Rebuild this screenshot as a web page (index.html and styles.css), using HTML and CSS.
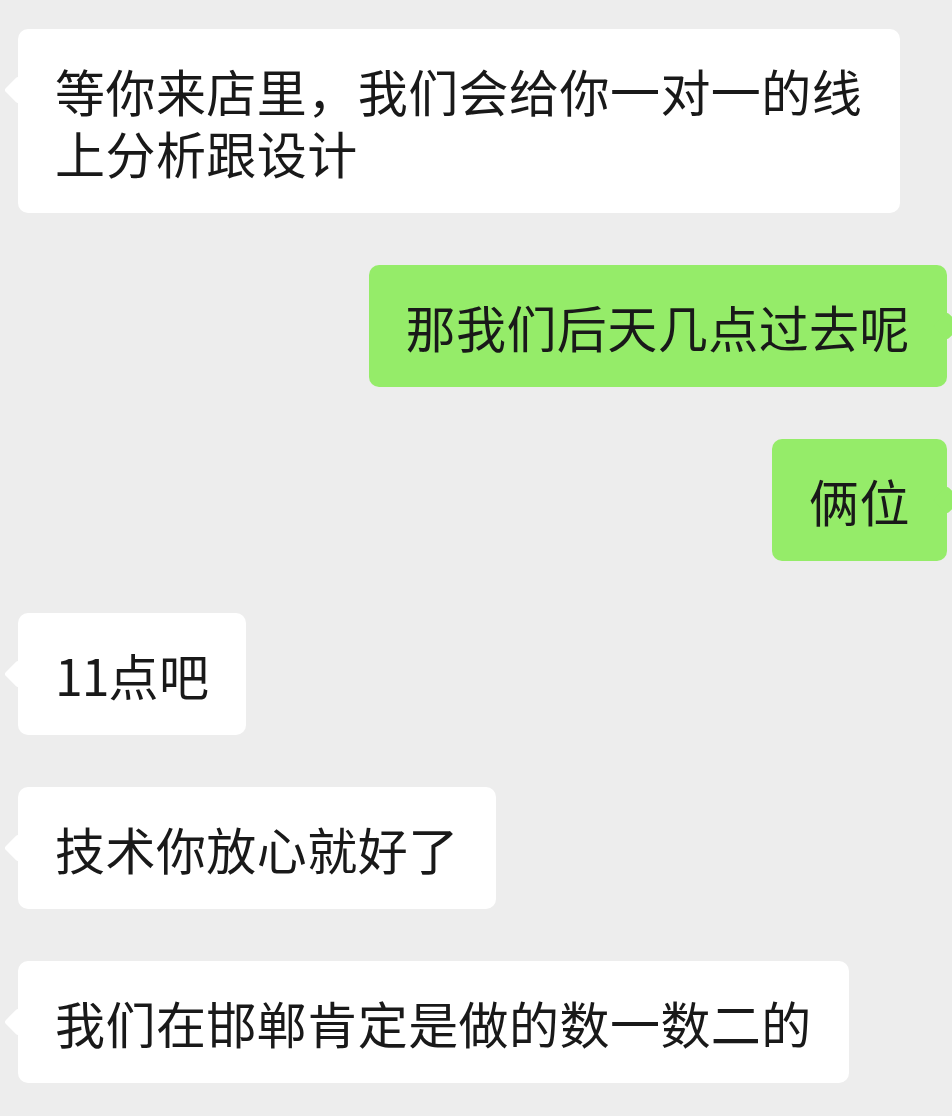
FILE: index.html
```html
<!DOCTYPE html>
<html lang="zh-CN">

<head>
    <meta charset="UTF-8">
    <meta name="viewport" content="width=device-width, initial-scale=1.0">
    <title>聊天</title>
    <link rel="stylesheet" href="styles.css">
</head>

<body>

    <div class="chat">
        <div class="msg msg-left">
            <div class="bubble">等你来店里，我们会给你一对一的线上分析跟设计</div>
        </div>

        <div class="msg msg-right">
            <div class="bubble">那我们后天几点过去呢</div>
        </div>

        <div class="msg msg-right">
            <div class="bubble">俩位</div>
        </div>

        <div class="msg msg-left">
            <div class="bubble"><span class="num">11</span>点吧</div>
        </div>

        <div class="msg msg-left">
            <div class="bubble">技术你放心就好了</div>
        </div>

        <div class="msg msg-left">
            <div class="bubble">我们在邯郸肯定是做的数一数二的</div>
        </div>
    </div>

</body>

</html>
```

FILE: styles.css
```css
body {
    margin: 0;
    padding: 0;
    background-color: #ededed;
    font-family: "Noto Sans CJK SC", "Noto Sans", sans-serif;
    color: #191919;
}

.chat {
    display: flex;
    flex-direction: column;
    gap: 52px;
    padding-top: 29px;
}

.msg {
    display: flex;
}

.msg-left {
    justify-content: flex-start;
    padding-left: 18px;
}

.msg-right {
    justify-content: flex-end;
    padding-right: 5px;
}

.bubble {
    position: relative;
    max-width: 808px;
    padding: 30px 37px;
    font-size: 50px;
    line-height: 62px;
    letter-spacing: 0.45px;
    border-radius: 10px;
    background-color: #fff;
}

.num {
    letter-spacing: -1px;
}

/* little tail next to the bubble */
.bubble::before {
    content: "";
    position: absolute;
    top: 51px;
    width: 20px;
    height: 20px;
    border-radius: 3px;
    background-color: inherit;
    transform: rotate(45deg);
}

.msg-left .bubble::before {
    left: -10px;
}

.msg-right .bubble {
    background-color: #95ec69;
}

.msg-right .bubble::before {
    right: -10px;
}
```
